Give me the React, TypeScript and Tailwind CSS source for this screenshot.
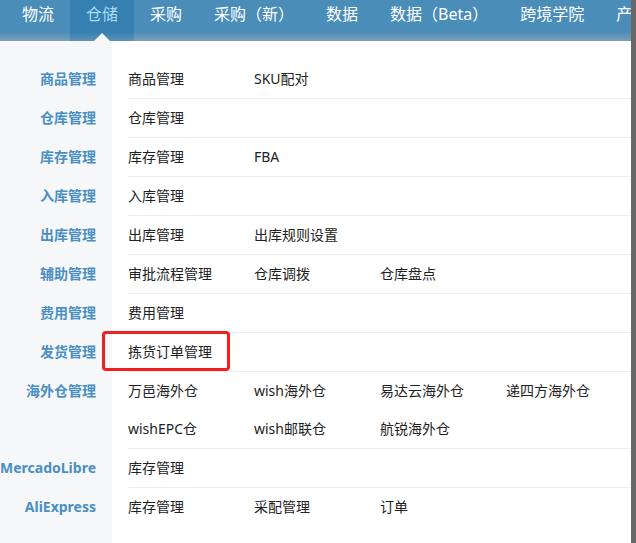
import React from 'react';

const navItems = ['物流', '仓储', '采购', '采购（新）', '数据', '数据（Beta）', '跨境学院', '产品'];

const groups: { label: string; items: string[] }[] = [
  { label: '商品管理', items: ['商品管理', 'SKU配对'] },
  { label: '仓库管理', items: ['仓库管理'] },
  { label: '库存管理', items: ['库存管理', 'FBA'] },
  { label: '入库管理', items: ['入库管理'] },
  { label: '出库管理', items: ['出库管理', '出库规则设置'] },
  { label: '辅助管理', items: ['审批流程管理', '仓库调拨', '仓库盘点'] },
  { label: '费用管理', items: ['费用管理'] },
  { label: '发货管理', items: ['拣货订单管理'] },
  { label: '海外仓管理', items: ['万邑海外仓', 'wish海外仓', '易达云海外仓', '递四方海外仓', 'wishEPC仓', 'wish邮联仓', '航锐海外仓'] },
  { label: 'MercadoLibre', items: ['库存管理'] },
  { label: 'AliExpress', items: ['库存管理', '采配管理', '订单'] },
];

export default function App() {
  return (
    <div
      className="relative flex w-[636px] h-[543px] overflow-hidden bg-white text-[14px]"
      style={{ fontFamily: '"Noto Sans", "Noto Sans CJK SC", sans-serif' }}
    >
      <div className="flex-1 flex flex-col min-w-0">
        {/* Top nav */}
        <div className="flex h-[41px] pl-[6px] bg-[linear-gradient(to_bottom,#4a8db9_0%,#4a8db9_78%,#7d9fb4_100%)] whitespace-nowrap overflow-hidden">
          {navItems.map((item) => {
            const active = item === '仓储';
            return (
              <div
                key={item}
                className={`relative h-full px-[16px] pt-[3px] text-[16px] leading-[22px] ${
                  active
                    ? 'bg-[linear-gradient(to_bottom,#3580b0_0%,#3580b0_78%,#5f93b5_100%)] text-[#a8dcf8]'
                    : 'text-white'
                }`}
              >
                {item}
                {active && (
                  <div className="absolute bottom-0 left-1/2 -translate-x-1/2 w-0 h-0 border-x-[8px] border-x-transparent border-b-[8px] border-b-[#f6f7f9]"></div>
                )}
              </div>
            );
          })}
        </div>

        {/* Menu body */}
        <div className="flex-1 pt-[19px] bg-[linear-gradient(to_right,#f6f7f9_112px,#ffffff_112px)]">
          {groups.map((g, gi) => (
            <div key={g.label} className="flex">
              <div className="w-[96px] shrink-0 h-[39px] pb-[2px] flex items-center justify-end font-bold text-[#4a8fc2] whitespace-nowrap">
                {g.label}
              </div>
              <div
                className={`ml-[32px] flex-1 grid grid-cols-[126px_126px_126px_126px] auto-rows-[38px] ${
                  gi === groups.length - 1 ? 'border-b border-transparent' : 'border-b border-[#eeeeee]'
                }`}
              >
                {g.items.map((it) => (
                  <div key={it} className="flex items-center pb-[2px] text-[#222222] whitespace-nowrap">
                    {it}
                  </div>
                ))}
              </div>
            </div>
          ))}
        </div>
      </div>

      {/* Right scrollbar strip */}
      <div className="w-[5px] h-full bg-[#686868]"></div>

      {/* Highlight annotation */}
      <div className="absolute left-[102px] top-[331px] w-[128px] h-[40px] border-[3px] border-[#f21f1f] rounded-[4px]"></div>
    </div>
  );
}
